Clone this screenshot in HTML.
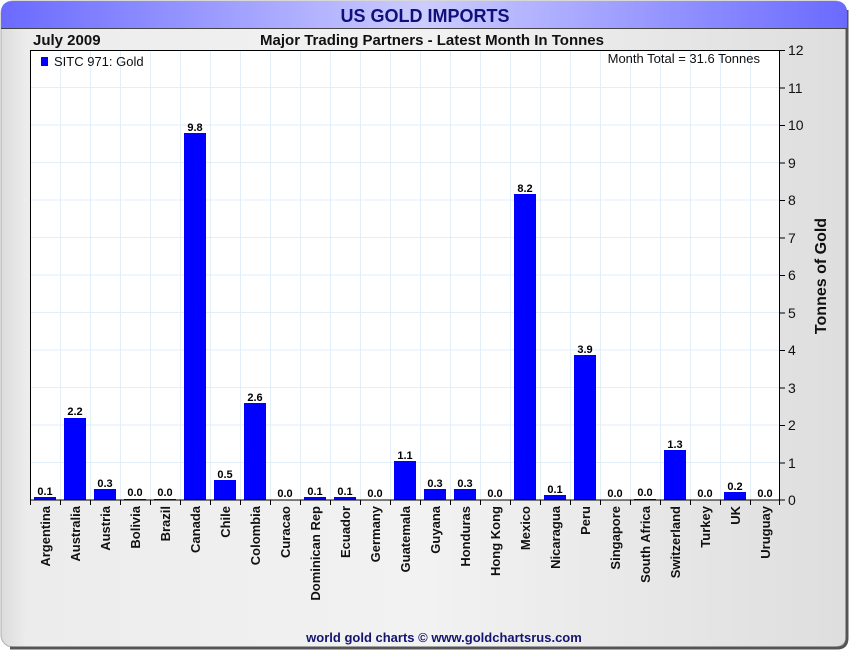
<!DOCTYPE html>
<html><head><meta charset="utf-8"><style>
html,body{margin:0;padding:0;background:#fff;}
svg{display:block;font-family:"Liberation Sans",Arial,sans-serif;}
</style></head><body>
<svg width="850" height="650" viewBox="0 0 850 650" xmlns="http://www.w3.org/2000/svg">
<defs>
<linearGradient id="bg" x1="0" x2="1" y1="0" y2="0">
<stop offset="0" stop-color="#dcdcdc"/><stop offset="0.03" stop-color="#ececec"/><stop offset="0.5" stop-color="#f2f2f2"/><stop offset="1" stop-color="#dedede"/></linearGradient>
<linearGradient id="hd" x1="0" x2="1" y1="0" y2="0">
<stop offset="0" stop-color="#6a6aff"/><stop offset="0.5" stop-color="#ccccff"/><stop offset="1" stop-color="#6a6aff"/></linearGradient>
</defs>
<rect x="0" y="0" width="850" height="650" fill="#fff"/>
<rect x="1" y="1" width="846" height="646" rx="12" fill="url(#bg)" stroke="#b0b0b0" stroke-width="1"/>
<path d="M847 10 V638 Q847 648 837 648 H10" fill="none" stroke="#555" stroke-width="3"/>
<path d="M1 28 V13 Q1 1 13 1 H835 Q847 1 847 13 V28 Z" fill="url(#hd)"/>
<line x1="1" y1="28.5" x2="847" y2="28.5" stroke="#444" stroke-width="1"/>
<text x="425" y="22" text-anchor="middle" font-size="18" font-weight="bold" fill="#10107a">US GOLD IMPORTS</text>
<text x="33" y="45" font-size="15" font-weight="bold" fill="#111">July 2009</text>
<text x="432" y="45" text-anchor="middle" font-size="15" font-weight="bold" fill="#111">Major Trading Partners - Latest Month In Tonnes</text>
<rect x="30" y="50" width="750" height="450" fill="#fff"/>
<g stroke="#e2eef8" stroke-width="1">
<line x1="60.5" y1="50" x2="60.5" y2="500"/><line x1="90.5" y1="50" x2="90.5" y2="500"/><line x1="120.5" y1="50" x2="120.5" y2="500"/><line x1="150.5" y1="50" x2="150.5" y2="500"/><line x1="180.5" y1="50" x2="180.5" y2="500"/><line x1="210.5" y1="50" x2="210.5" y2="500"/><line x1="240.5" y1="50" x2="240.5" y2="500"/><line x1="270.5" y1="50" x2="270.5" y2="500"/><line x1="300.5" y1="50" x2="300.5" y2="500"/><line x1="330.5" y1="50" x2="330.5" y2="500"/><line x1="360.5" y1="50" x2="360.5" y2="500"/><line x1="390.5" y1="50" x2="390.5" y2="500"/><line x1="420.5" y1="50" x2="420.5" y2="500"/><line x1="450.5" y1="50" x2="450.5" y2="500"/><line x1="480.5" y1="50" x2="480.5" y2="500"/><line x1="510.5" y1="50" x2="510.5" y2="500"/><line x1="540.5" y1="50" x2="540.5" y2="500"/><line x1="570.5" y1="50" x2="570.5" y2="500"/><line x1="600.5" y1="50" x2="600.5" y2="500"/><line x1="630.5" y1="50" x2="630.5" y2="500"/><line x1="660.5" y1="50" x2="660.5" y2="500"/><line x1="690.5" y1="50" x2="690.5" y2="500"/><line x1="720.5" y1="50" x2="720.5" y2="500"/><line x1="750.5" y1="50" x2="750.5" y2="500"/>
<line x1="30" y1="87.5" x2="780" y2="87.5"/><line x1="30" y1="125" x2="780" y2="125"/><line x1="30" y1="162.5" x2="780" y2="162.5"/><line x1="30" y1="200" x2="780" y2="200"/><line x1="30" y1="237.5" x2="780" y2="237.5"/><line x1="30" y1="275" x2="780" y2="275"/><line x1="30" y1="312.5" x2="780" y2="312.5"/><line x1="30" y1="350" x2="780" y2="350"/><line x1="30" y1="387.5" x2="780" y2="387.5"/><line x1="30" y1="425" x2="780" y2="425"/><line x1="30" y1="462.5" x2="780" y2="462.5"/>
</g>
<g fill="#0000ff">
<rect x="34" y="497" width="22" height="3"/>
<rect x="64" y="418" width="22" height="82"/>
<rect x="94" y="489" width="22" height="11"/>
<rect x="124" y="499" width="22" height="1"/>
<rect x="154" y="499" width="22" height="1"/>
<rect x="184" y="133" width="22" height="367"/>
<rect x="214" y="480" width="22" height="20"/>
<rect x="244" y="403" width="22" height="97"/>
<rect x="304" y="497" width="22" height="3"/>
<rect x="334" y="497" width="22" height="3"/>
<rect x="394" y="461" width="22" height="39"/>
<rect x="424" y="489" width="22" height="11"/>
<rect x="454" y="489" width="22" height="11"/>
<rect x="514" y="194" width="22" height="306"/>
<rect x="544" y="495" width="22" height="5"/>
<rect x="574" y="355" width="22" height="145"/>
<rect x="634" y="499" width="22" height="1"/>
<rect x="664" y="450" width="22" height="50"/>
<rect x="724" y="492" width="22" height="8"/>
</g>
<g font-size="11" font-weight="bold" fill="#000" text-anchor="middle">
<text x="45" y="495">0.1</text><text x="75" y="415">2.2</text><text x="105" y="487">0.3</text><text x="135" y="496">0.0</text><text x="165" y="496">0.0</text><text x="195" y="131">9.8</text><text x="225" y="478">0.5</text><text x="255" y="401">2.6</text><text x="285" y="497">0.0</text><text x="315" y="495">0.1</text><text x="345" y="495">0.1</text><text x="375" y="497">0.0</text><text x="405" y="459">1.1</text><text x="435" y="487">0.3</text><text x="465" y="487">0.3</text><text x="495" y="497">0.0</text><text x="525" y="192">8.2</text><text x="555" y="493">0.1</text><text x="585" y="353">3.9</text><text x="615" y="497">0.0</text><text x="645" y="496">0.0</text><text x="675" y="448">1.3</text><text x="705" y="497">0.0</text><text x="735" y="490">0.2</text><text x="765" y="497">0.0</text>
</g>
<rect x="30.5" y="50.5" width="749" height="449.5" fill="none" stroke="#000" stroke-width="1"/>
<g stroke="#000" stroke-width="1">
<line x1="30.5" y1="500" x2="30.5" y2="505"/><line x1="60.5" y1="500" x2="60.5" y2="505"/><line x1="90.5" y1="500" x2="90.5" y2="505"/><line x1="120.5" y1="500" x2="120.5" y2="505"/><line x1="150.5" y1="500" x2="150.5" y2="505"/><line x1="180.5" y1="500" x2="180.5" y2="505"/><line x1="210.5" y1="500" x2="210.5" y2="505"/><line x1="240.5" y1="500" x2="240.5" y2="505"/><line x1="270.5" y1="500" x2="270.5" y2="505"/><line x1="300.5" y1="500" x2="300.5" y2="505"/><line x1="330.5" y1="500" x2="330.5" y2="505"/><line x1="360.5" y1="500" x2="360.5" y2="505"/><line x1="390.5" y1="500" x2="390.5" y2="505"/><line x1="420.5" y1="500" x2="420.5" y2="505"/><line x1="450.5" y1="500" x2="450.5" y2="505"/><line x1="480.5" y1="500" x2="480.5" y2="505"/><line x1="510.5" y1="500" x2="510.5" y2="505"/><line x1="540.5" y1="500" x2="540.5" y2="505"/><line x1="570.5" y1="500" x2="570.5" y2="505"/><line x1="600.5" y1="500" x2="600.5" y2="505"/><line x1="630.5" y1="500" x2="630.5" y2="505"/><line x1="660.5" y1="500" x2="660.5" y2="505"/><line x1="690.5" y1="500" x2="690.5" y2="505"/><line x1="720.5" y1="500" x2="720.5" y2="505"/><line x1="750.5" y1="500" x2="750.5" y2="505"/><line x1="779.5" y1="500" x2="779.5" y2="505"/>
<line x1="780" y1="50.5" x2="785" y2="50.5"/><line x1="780" y1="88" x2="785" y2="88"/><line x1="780" y1="125.5" x2="785" y2="125.5"/><line x1="780" y1="163" x2="785" y2="163"/><line x1="780" y1="200.5" x2="785" y2="200.5"/><line x1="780" y1="238" x2="785" y2="238"/><line x1="780" y1="275.5" x2="785" y2="275.5"/><line x1="780" y1="313" x2="785" y2="313"/><line x1="780" y1="350.5" x2="785" y2="350.5"/><line x1="780" y1="388" x2="785" y2="388"/><line x1="780" y1="425.5" x2="785" y2="425.5"/><line x1="780" y1="463" x2="785" y2="463"/><line x1="780" y1="500" x2="785" y2="500"/>
</g>
<g font-size="14" fill="#111">
<text x="788" y="55">12</text><text x="788" y="93">11</text><text x="788" y="130">10</text><text x="788" y="168">9</text><text x="788" y="205">8</text><text x="788" y="243">7</text><text x="788" y="280">6</text><text x="788" y="318">5</text><text x="788" y="355">4</text><text x="788" y="393">3</text><text x="788" y="430">2</text><text x="788" y="468">1</text><text x="788" y="505">0</text>
</g>
<text transform="translate(826,276) rotate(-90)" text-anchor="middle" font-size="16" font-weight="bold" fill="#111">Tonnes of Gold</text>
<rect x="41" y="57" width="7" height="9" fill="#0000ff"/>
<text x="54" y="66" font-size="13" fill="#111">SITC 971: Gold</text>
<text x="760" y="63" text-anchor="end" font-size="13" fill="#111">Month Total = 31.6 Tonnes</text>
<g font-size="13" font-weight="bold" fill="#111" text-anchor="end">
<text transform="translate(50,506) rotate(-90)">Argentina</text>
<text transform="translate(80,506) rotate(-90)">Australia</text>
<text transform="translate(110,506) rotate(-90)">Austria</text>
<text transform="translate(140,506) rotate(-90)">Bolivia</text>
<text transform="translate(170,506) rotate(-90)">Brazil</text>
<text transform="translate(200,506) rotate(-90)">Canada</text>
<text transform="translate(230,506) rotate(-90)">Chile</text>
<text transform="translate(260,506) rotate(-90)">Colombia</text>
<text transform="translate(290,506) rotate(-90)">Curacao</text>
<text transform="translate(320,506) rotate(-90)">Dominican Rep</text>
<text transform="translate(350,506) rotate(-90)">Ecuador</text>
<text transform="translate(380,506) rotate(-90)">Germany</text>
<text transform="translate(410,506) rotate(-90)">Guatemala</text>
<text transform="translate(440,506) rotate(-90)">Guyana</text>
<text transform="translate(470,506) rotate(-90)">Honduras</text>
<text transform="translate(500,506) rotate(-90)">Hong Kong</text>
<text transform="translate(530,506) rotate(-90)">Mexico</text>
<text transform="translate(560,506) rotate(-90)">Nicaragua</text>
<text transform="translate(590,506) rotate(-90)">Peru</text>
<text transform="translate(620,506) rotate(-90)">Singapore</text>
<text transform="translate(650,506) rotate(-90)">South Africa</text>
<text transform="translate(680,506) rotate(-90)">Switzerland</text>
<text transform="translate(710,506) rotate(-90)">Turkey</text>
<text transform="translate(740,506) rotate(-90)">UK</text>
<text transform="translate(770,506) rotate(-90)">Uruguay</text>
</g>
<text x="444" y="642" text-anchor="middle" font-size="13" font-weight="bold" fill="#141470">world gold charts © www.goldchartsrus.com</text>
</svg>
</body></html>
